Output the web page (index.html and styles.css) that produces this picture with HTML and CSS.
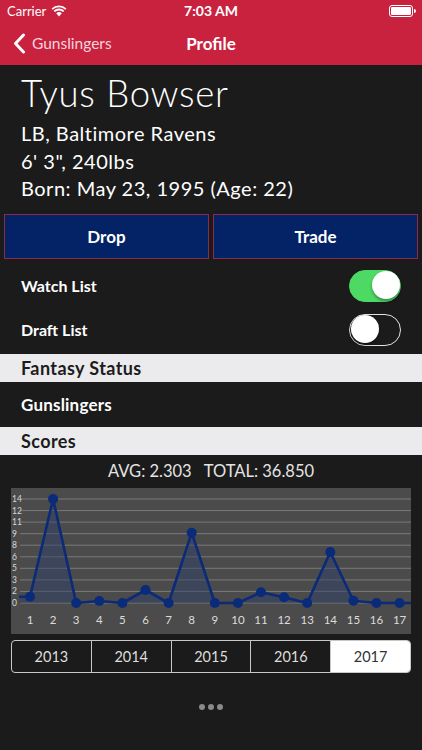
FILE: index.html
```html
<!DOCTYPE html>
<html>
<head>
<meta charset="utf-8">
<link rel="stylesheet" href="styles.css">
</head>
<body>
<div class="app">
  <header class="top">
    <div class="status">
      <div class="status-left">
        <span>Carrier</span>
        <svg class="wifi" width="16" height="12" viewBox="0 0 16 12">
          <path d="M8 11.5 L5.2 8.3 A4 4 0 0 1 10.8 8.3 Z" fill="#fff"/>
          <path d="M3.3 6.4 A6.8 6.8 0 0 1 12.7 6.4" fill="none" stroke="#fff" stroke-width="1.8"/>
          <path d="M1.2 4.2 A9.8 9.8 0 0 1 14.8 4.2" fill="none" stroke="#fff" stroke-width="1.8"/>
        </svg>
      </div>
      <div class="status-time">7:03 AM</div>
      <div class="status-right">
        <svg width="27" height="12" viewBox="0 0 27 12">
          <rect x="0.5" y="0.5" width="23" height="11" rx="2.5" fill="none" stroke="#fff" stroke-width="1"/>
          <rect x="2" y="2" width="20" height="8" rx="1.2" fill="#fff"/>
          <path d="M25 4 a1.5 1.5 0 0 1 0 4 Z" fill="#fff"/>
        </svg>
      </div>
    </div>
    <nav class="nav">
      <div class="back">
        <svg width="13" height="21" viewBox="0 0 13 21">
          <path d="M10.5 2 L2.5 10.5 L10.5 19" fill="none" stroke="#fff" stroke-width="3" stroke-linecap="round" stroke-linejoin="round"/>
        </svg>
        <span>Gunslingers</span>
      </div>
      <div class="nav-title">Profile</div>
    </nav>
  </header>

  <section class="info">
    <h1 class="name">Tyus Bowser</h1>
    <div class="line">LB, Baltimore Ravens</div>
    <div class="line">6' 3", 240lbs</div>
    <div class="line">Born: May 23, 1995 (Age: 22)</div>
  </section>

  <div class="actions">
    <button class="btn">Drop</button>
    <button class="btn">Trade</button>
  </div>

  <div class="toggles">
    <div class="row">
      <span>Watch List</span>
      <span class="switch on"><span class="knob"></span></span>
    </div>
    <div class="row">
      <span>Draft List</span>
      <span class="switch"><span class="knob"></span></span>
    </div>
  </div>

  <div class="section">Fantasy Status</div>
  <div class="row plain">Gunslingers</div>
  <div class="section">Scores</div>

  <div class="summary">AVG: 2.303&nbsp;&nbsp;&nbsp;TOTAL: 36.850</div>

  <div class="chart">
    <svg width="400" height="146" viewBox="0 0 400 146">
      <rect x="0" y="0" width="400" height="146" fill="#4b4b4b"/>
      <g stroke="#7a7a7a" stroke-width="1">
        <line x1="9" y1="11" x2="400" y2="11"/>
        <line x1="9" y1="22.6" x2="400" y2="22.6"/>
        <line x1="9" y1="34.1" x2="400" y2="34.1"/>
        <line x1="9" y1="45.7" x2="400" y2="45.7"/>
        <line x1="9" y1="57.2" x2="400" y2="57.2"/>
        <line x1="9" y1="68.8" x2="400" y2="68.8"/>
        <line x1="9" y1="80.3" x2="400" y2="80.3"/>
        <line x1="9" y1="91.9" x2="400" y2="91.9"/>
        <line x1="9" y1="103.4" x2="400" y2="103.4"/>
        <line x1="9" y1="115" x2="400" y2="115"/>
      </g>
      <g class="ylab" fill="#d8d8d8" font-size="8.5" text-anchor="start">
        <text x="1" y="14">14</text>
        <text x="1" y="25.6">12</text>
        <text x="1" y="37.1">11</text>
        <text x="1" y="48.7">9</text>
        <text x="1" y="60.2">8</text>
        <text x="1" y="71.8">6</text>
        <text x="1" y="83.3">5</text>
        <text x="1" y="94.9">3</text>
        <text x="1" y="106.4">2</text>
        <text x="1" y="118">0</text>
      </g>
      <polygon fill="#2c3e6e" fill-opacity="0.45" points="8,115 8,108.7 19,108.7 42.1,11 65.2,115 88.3,113 111.4,115 134.5,102 157.6,115 180.7,44.7 203.8,115 226.9,115 250,104.3 273.1,109.3 296.2,115 319.3,64 342.4,112.7 365.5,115 388.6,115 400,115"/>
      <polyline fill="none" stroke="#0b2a78" stroke-width="2.6" stroke-linejoin="round" points="8,108.7 19,108.7 42.1,11 65.2,115 88.3,113 111.4,115 134.5,102 157.6,115 180.7,44.7 203.8,115 226.9,115 250,104.3 273.1,109.3 296.2,115 319.3,64 342.4,112.7 365.5,115 388.6,115 400,115"/>
      <g fill="#0a2a7a">
        <circle cx="19" cy="108.7" r="5"/>
        <circle cx="42.1" cy="11" r="5"/>
        <circle cx="65.2" cy="115" r="5"/>
        <circle cx="88.3" cy="113" r="5"/>
        <circle cx="111.4" cy="115" r="5"/>
        <circle cx="134.5" cy="102" r="5"/>
        <circle cx="157.6" cy="115" r="5"/>
        <circle cx="180.7" cy="44.7" r="5"/>
        <circle cx="203.8" cy="115" r="5"/>
        <circle cx="226.9" cy="115" r="5"/>
        <circle cx="250" cy="104.3" r="5"/>
        <circle cx="273.1" cy="109.3" r="5"/>
        <circle cx="296.2" cy="115" r="5"/>
        <circle cx="319.3" cy="64" r="5"/>
        <circle cx="342.4" cy="112.7" r="5"/>
        <circle cx="365.5" cy="115" r="5"/>
        <circle cx="388.6" cy="115" r="5"/>
      </g>
      <g class="xlab" fill="#dcdcdc" font-size="11.5" text-anchor="middle">
        <text x="19" y="135.5">1</text>
        <text x="42.1" y="135.5">2</text>
        <text x="65.2" y="135.5">3</text>
        <text x="88.3" y="135.5">4</text>
        <text x="111.4" y="135.5">5</text>
        <text x="134.5" y="135.5">6</text>
        <text x="157.6" y="135.5">7</text>
        <text x="180.7" y="135.5">8</text>
        <text x="203.8" y="135.5">9</text>
        <text x="226.9" y="135.5">10</text>
        <text x="250" y="135.5">11</text>
        <text x="273.1" y="135.5">12</text>
        <text x="296.2" y="135.5">13</text>
        <text x="319.3" y="135.5">14</text>
        <text x="342.4" y="135.5">15</text>
        <text x="365.5" y="135.5">16</text>
        <text x="388.6" y="135.5">17</text>
      </g>
    </svg>
  </div>

  <div class="seg">
    <div class="seg-item">2013</div>
    <div class="seg-item">2014</div>
    <div class="seg-item">2015</div>
    <div class="seg-item">2016</div>
    <div class="seg-item active">2017</div>
  </div>

  <div class="more">
    <span class="dot"></span><span class="dot"></span><span class="dot"></span>
  </div>
</div>
</body>
</html>
```

FILE: styles.css
```css
* { box-sizing: border-box; }
html, body {
  margin: 0;
  padding: 0;
  background: #1b1b1b;
}
body {
  font-family: "Lato", "Open Sans", sans-serif;
  color: #fff;
  width: 422px;
  height: 750px;
  overflow: hidden;
}
.app { display: flex; flex-direction: column; }

.top {
  background: #c8223f;
  height: 65px;
  display: flex;
  flex-direction: column;
}
.status {
  height: 21px;
  display: flex;
  align-items: center;
  justify-content: space-between;
  padding: 0 6px 0 7px;
  font-size: 13px;
  position: relative;
}
.status-left { display: flex; align-items: center; gap: 5px; }
.status-time {
  position: absolute;
  left: 0; right: 0;
  text-align: center;
  font-weight: 700;
  font-size: 14px;
}
.status-right { display: flex; align-items: center; position: relative; z-index: 1; }

.nav {
  flex: 1;
  display: flex;
  align-items: center;
  position: relative;
  padding-left: 13px;
}
.back {
  display: flex;
  align-items: center;
  gap: 6px;
  font-size: 15.5px;
  color: #f2d6dc;
  position: relative;
  z-index: 1;
}
.nav-title {
  position: absolute;
  left: 0; right: 0;
  text-align: center;
  font-weight: 700;
  font-size: 17px;
}

.info { padding: 6px 21px 0; }
.name {
  margin: 0 0 5px;
  font-size: 36.5px;
  font-weight: 300;
  line-height: 44px;
  letter-spacing: 0.7px;
}
.line {
  font-size: 20px;
  line-height: 27.5px;
  font-weight: 400;
  letter-spacing: 0.5px;
}

.actions {
  display: flex;
  gap: 4px;
  padding: 0 4px;
  margin-top: 11px;
}
.btn {
  flex: 1;
  height: 45px;
  background: #042266;
  border: 1px solid #8c2a4c;
  color: #fff;
  font-family: inherit;
  font-size: 17px;
  font-weight: 700;
}

.toggles { margin-top: 5px; margin-bottom: 2px; }
.row {
  height: 44px;
  display: flex;
  align-items: center;
  justify-content: space-between;
  padding: 0 21px;
  font-size: 16px;
  font-weight: 700;
}
.row.plain { height: 45px; font-size: 17px; letter-spacing: 0.2px; }

.switch {
  width: 52px;
  height: 32px;
  border-radius: 16px;
  border: 1.5px solid #e3e3e3;
  position: relative;
  display: block;
}
.switch .knob {
  position: absolute;
  top: 0.5px;
  left: 0.5px;
  width: 28px;
  height: 28px;
  border-radius: 50%;
  background: #fff;
  box-shadow: 0 2px 3px rgba(0,0,0,0.35);
}
.switch.on {
  background: #4cd964;
  border-color: #4cd964;
}
.switch.on .knob { left: auto; right: 0.5px; }

.section {
  height: 28px;
  background: #ebebee;
  color: #1c1c1c;
  font-size: 18px;
  font-weight: 700;
  letter-spacing: 0.4px;
  display: flex;
  align-items: center;
  padding: 0 21px;
}

.summary {
  height: 33px;
  display: flex;
  align-items: center;
  justify-content: center;
  font-size: 16.5px;
  color: #e4e4e4;
}

.chart { padding: 0 11px; height: 146px; }
.chart svg { display: block; font-family: "Lato", sans-serif; }

.seg {
  margin: 6px 11px 0;
  height: 33px;
  border: 1px solid #c8c8c8;
  border-radius: 4px;
  display: flex;
  overflow: hidden;
}
.seg-item {
  flex: 1;
  display: flex;
  align-items: center;
  justify-content: center;
  font-size: 14.5px;
  color: #dedede;
  border-right: 1px solid #c8c8c8;
}
.seg-item:last-child { border-right: 0; }
.seg-item.active { background: #fff; color: #333; }

.more {
  display: flex;
  justify-content: center;
  gap: 3px;
  margin-top: 31px;
}
.dot {
  width: 6px;
  height: 6px;
  border-radius: 50%;
  background: #8a8a8a;
}
```
